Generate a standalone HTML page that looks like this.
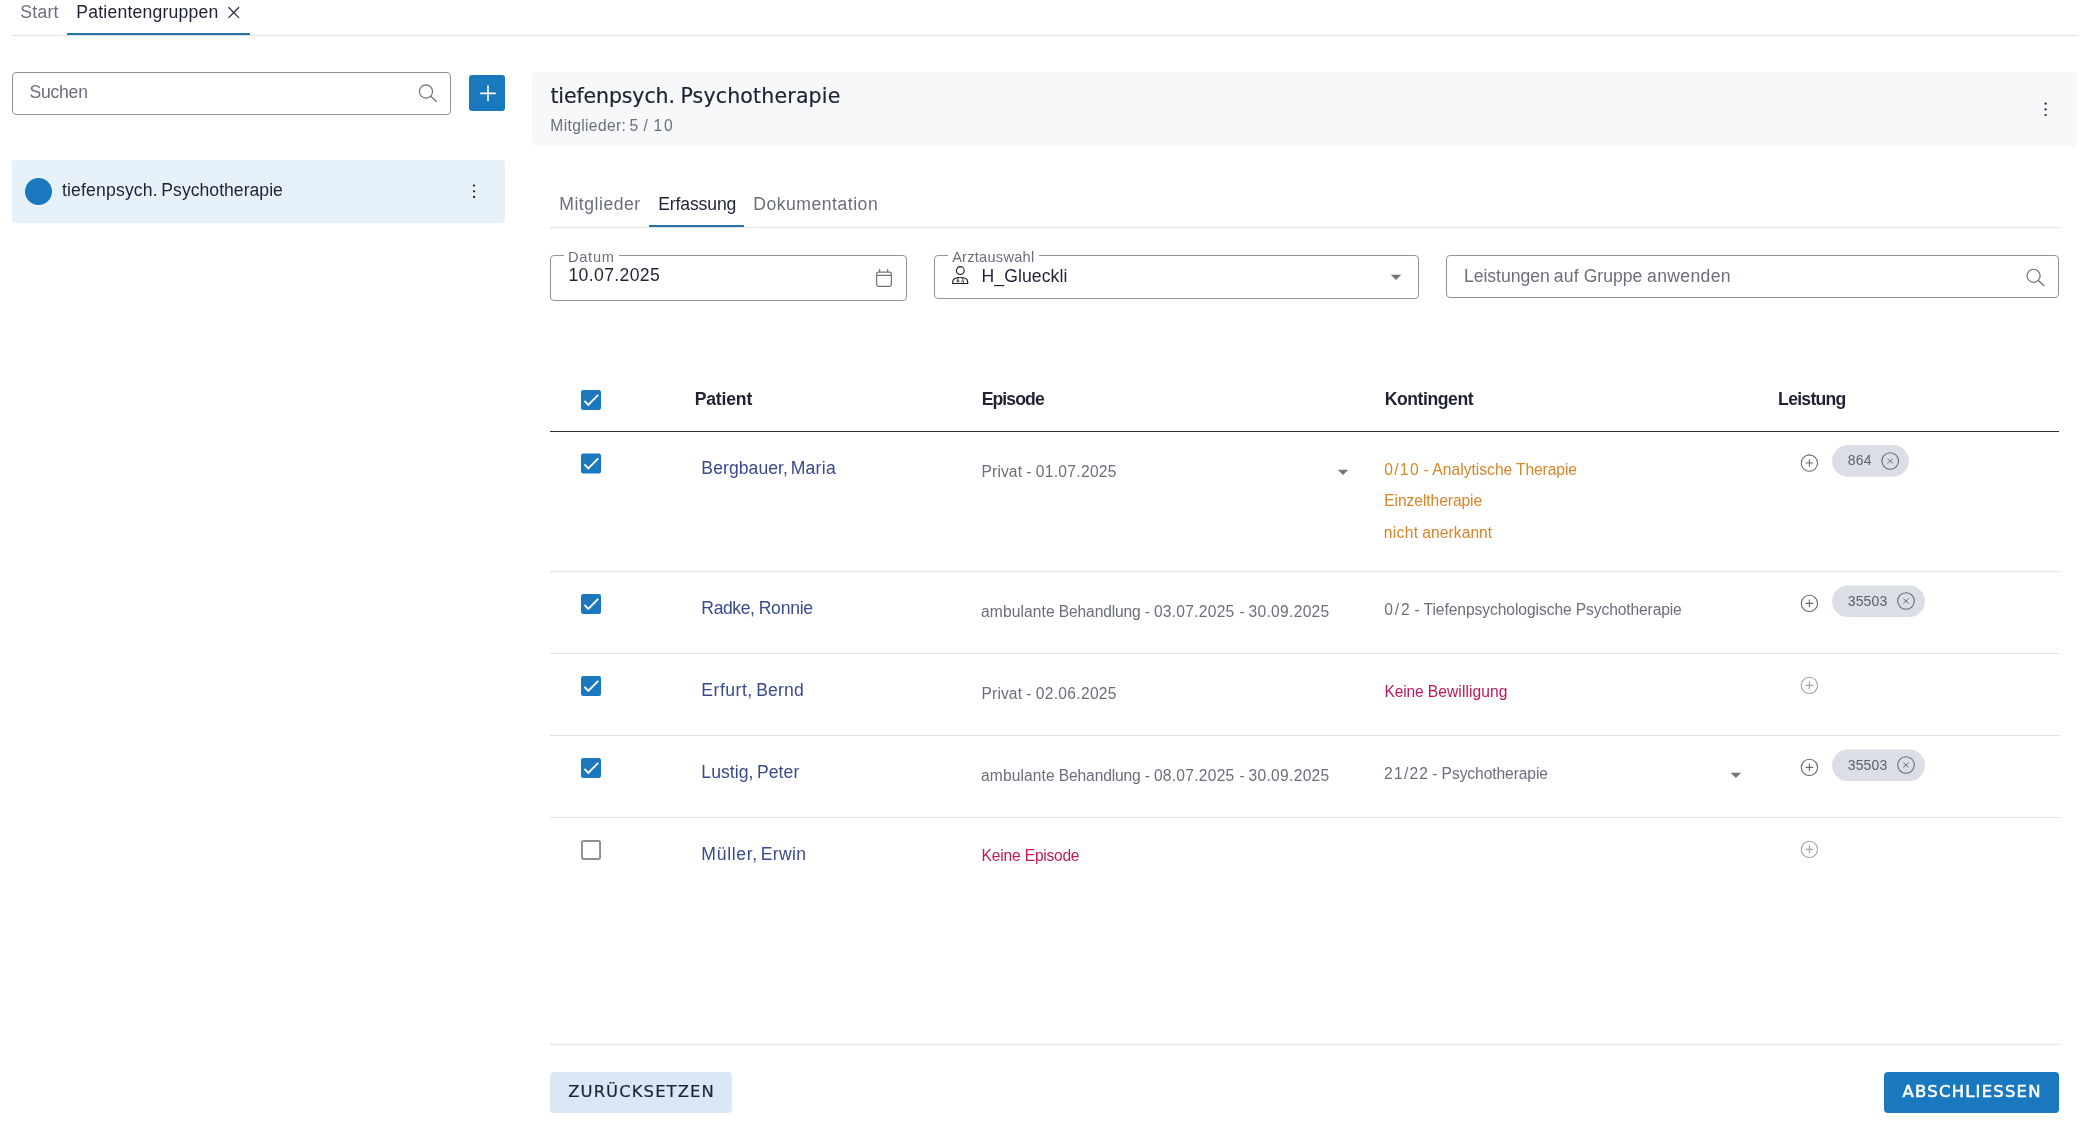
<!DOCTYPE html>
<html lang="de"><head><meta charset="utf-8"><title>Patientengruppen</title>
<style>
*{box-sizing:border-box;margin:0;padding:0}
html,body{width:2087px;height:1132px;background:#fff;overflow:hidden}
body{font-family:"Liberation Sans",sans-serif;color:#1e2233;position:relative}
.a{position:absolute;white-space:nowrap;line-height:1}
.ln{position:absolute;background:#e0e0e0;height:1px}
.box{position:absolute;border:1px solid #929398;border-radius:4px;background:#fff}
.cb{position:absolute;width:20px;height:20px;border-radius:2px;background:#1a78bf}
.cbe{position:absolute;width:20px;height:20px;border-radius:2.5px;border:1.5px solid #8a8c93;background:#fff}
svg{display:block;overflow:visible}
#root{position:absolute;left:0;top:0;width:2087px;height:1132px;will-change:transform}
</style></head><body><div id="root">

<svg class="a" style="left:228px;top:6px" width="12" height="13" viewBox="0 0 12 13"><g transform="translate(0 0.8) scale(0.9583 0.9583)"><path d="M0.5 0.5L11.5 11.5M11.5 0.5L0.5 11.5" stroke="#1e2233" stroke-width="1.2" fill="none"/></g></svg>
<div class="ln" style="left:12px;top:35px;width:2065px"></div>
<div class="a" style="left:67px;top:33px;width:183px;height:2px;background:#2673aa"></div>
<div class="box" style="left:12px;top:72px;width:439px;height:43px"></div>
<svg class="a" style="left:418px;top:84px" width="19" height="19" viewBox="0 0 19 19"><g transform="translate(0.8 0.3)"><circle cx="7.2" cy="7.2" r="6.55" stroke="#6e707a" stroke-width="1.2" fill="none"/><path d="M11.9 11.9L17.9 17.4" stroke="#6e707a" stroke-width="1.3"/></g></svg>
<div class="a" style="left:469px;top:75px;width:36px;height:36px;border-radius:3px;background:#1a78bf"></div>
<svg class="a" style="left:480px;top:85px" width="17" height="17" viewBox="0 0 17 17"><g transform="translate(0 0.4)"><path d="M8 0.2V15.8M0.2 8H15.8" stroke="#fff" stroke-width="1.6" fill="none"/></g></svg>
<div class="a" style="left:12px;top:160px;width:493px;height:63px;border-radius:4px;background:#e6f1f9"></div>
<div class="a" style="left:25px;top:178px;width:27px;height:27px;border-radius:50%;background:#1a78bf"></div>
<svg class="a" style="left:472px;top:184px" width="5" height="17" viewBox="0 0 5 17"><g transform="translate(0 0)"><circle cx="2.1" cy="1.6" r="1.15" fill="#1e2233"/><circle cx="2.1" cy="7.3" r="1.15" fill="#1e2233"/><circle cx="2.1" cy="13" r="1.15" fill="#1e2233"/></g></svg>
<div class="a" style="left:532px;top:72px;width:1545px;height:74px;border-radius:4px;background:#f7f8fa"></div>
<svg class="a" style="left:2043px;top:102px" width="5" height="17" viewBox="0 0 5 17"><g transform="translate(0.5 0.1)"><circle cx="2.1" cy="1.6" r="1.15" fill="#1e2233"/><circle cx="2.1" cy="7.3" r="1.15" fill="#1e2233"/><circle cx="2.1" cy="13" r="1.15" fill="#1e2233"/></g></svg>
<div class="ln" style="left:550px;top:227px;width:1509px"></div>
<div class="a" style="left:649px;top:225px;width:95px;height:2px;background:#2673aa"></div>
<div class="box" style="left:550px;top:255px;width:357px;height:46px"></div>
<div class="a" style="left:563.7px;top:254px;width:55.5px;height:3px;background:#fff"></div>
<svg class="a" style="left:876px;top:269px" width="17" height="19" viewBox="0 0 17 19"><g transform="translate(0 0)"><rect x="0.6" y="3.2" width="14.8" height="14.2" rx="1.8" stroke="#70727e" stroke-width="1.2" fill="none"/><path d="M0.6 6.3H15.4M3.6 0V3.2M11.6 0V3.2" stroke="#70727e" stroke-width="1.2"/></g></svg>
<div class="box" style="left:934px;top:255px;width:485px;height:44px"></div>
<div class="a" style="left:947.8px;top:254px;width:91.1px;height:3px;background:#fff"></div>
<svg class="a" style="left:952px;top:266px" width="17" height="19" viewBox="0 0 17 19"><g transform="translate(0 0)"><circle cx="8.3" cy="4.6" r="3.9" stroke="#1e2233" stroke-width="1.2" fill="none"/><path d="M0.7 17.5V16C0.7 12.6 3.9 11.5 8.2 11.5S15.7 12.6 15.7 16V17.5Z" stroke="#1e2233" stroke-width="1.2" fill="none" stroke-linejoin="round"/><path d="M5.9 11.9V14.2M10.8 11.9V14.3M9.9 16.6V15.5a0.9 0.9 0 0 1 1.8 0V16.6" stroke="#1e2233" stroke-width="0.9" fill="none"/><circle cx="5.9" cy="15.2" r="0.95" stroke="#1e2233" stroke-width="0.9" fill="none"/></g></svg>
<svg class="a" style="left:1390px;top:274px" width="12" height="7" viewBox="0 0 12 7"><g transform="translate(0.7 0.8)"><path d="M0 0H10.6L5.3 5.3Z" fill="#757575"/></g></svg>
<div class="box" style="left:1446px;top:255px;width:613px;height:43px"></div>
<svg class="a" style="left:2026px;top:268px" width="19" height="19" viewBox="0 0 19 19"><g transform="translate(0.4 0.6)"><circle cx="7.2" cy="7.2" r="6.55" stroke="#6e707a" stroke-width="1.2" fill="none"/><path d="M11.9 11.9L17.9 17.4" stroke="#6e707a" stroke-width="1.3"/></g></svg>
<div class="a" style="left:550px;top:431px;width:1509px;height:1px;background:#2a2d38"></div>
<div class="ln" style="left:550px;top:571px;width:1509px"></div>
<div class="ln" style="left:550px;top:653px;width:1509px"></div>
<div class="ln" style="left:550px;top:735px;width:1509px"></div>
<div class="ln" style="left:550px;top:817px;width:1509px"></div>
<div class="ln" style="left:550px;top:1044px;width:1509px"></div>
<svg class="a" style="left:581px;top:390px" width="21" height="21" viewBox="0 0 21 21"><g transform="translate(0 0)"><rect x="0" y="0" width="20" height="20" rx="2.2" fill="#1a78bf"/><path d="M3.4 10.9L7.3 14.9L17.2 4.9" stroke="#fff" stroke-width="1.9" fill="none"/></g></svg>
<svg class="a" style="left:581px;top:453px" width="21" height="21" viewBox="0 0 21 21"><g transform="translate(0 0.5)"><rect x="0" y="0" width="20" height="20" rx="2.2" fill="#1a78bf"/><path d="M3.4 10.9L7.3 14.9L17.2 4.9" stroke="#fff" stroke-width="1.9" fill="none"/></g></svg>
<svg class="a" style="left:581px;top:594px" width="21" height="21" viewBox="0 0 21 21"><g transform="translate(0 0)"><rect x="0" y="0" width="20" height="20" rx="2.2" fill="#1a78bf"/><path d="M3.4 10.9L7.3 14.9L17.2 4.9" stroke="#fff" stroke-width="1.9" fill="none"/></g></svg>
<svg class="a" style="left:581px;top:676px" width="21" height="21" viewBox="0 0 21 21"><g transform="translate(0 0)"><rect x="0" y="0" width="20" height="20" rx="2.2" fill="#1a78bf"/><path d="M3.4 10.9L7.3 14.9L17.2 4.9" stroke="#fff" stroke-width="1.9" fill="none"/></g></svg>
<svg class="a" style="left:581px;top:758px" width="21" height="21" viewBox="0 0 21 21"><g transform="translate(0 0)"><rect x="0" y="0" width="20" height="20" rx="2.2" fill="#1a78bf"/><path d="M3.4 10.9L7.3 14.9L17.2 4.9" stroke="#fff" stroke-width="1.9" fill="none"/></g></svg>
<svg class="a" style="left:581px;top:840px" width="21" height="21" viewBox="0 0 21 21"><g transform="translate(0 0)"><rect x="0.95" y="0.95" width="18.1" height="18.1" rx="1.7" stroke="#8d8e94" stroke-width="1.9" fill="none"/></g></svg>
<svg class="a" style="left:1337px;top:469px" width="12" height="7" viewBox="0 0 12 7"><g transform="translate(0.7 0.8)"><path d="M0 0H10.6L5.3 5.3Z" fill="#757575"/></g></svg>
<svg class="a" style="left:1730px;top:772px" width="12" height="7" viewBox="0 0 12 7"><g transform="translate(0.6 0.8)"><path d="M0 0H10.6L5.3 5.3Z" fill="#757575"/></g></svg>
<svg class="a" style="left:1799px;top:453px" width="21" height="21" viewBox="0 0 21 21"><g transform="translate(0.4 0.05)"><circle cx="10" cy="10" r="8.15" stroke="#666a76" stroke-width="1.1" fill="none"/><path d="M10 6.2V13.8M6.2 10H13.8" stroke="#666a76" stroke-width="1.1"/></g></svg>
<svg class="a" style="left:1799px;top:593px" width="21" height="21" viewBox="0 0 21 21"><g transform="translate(0.4 0.4)"><circle cx="10" cy="10" r="8.15" stroke="#666a76" stroke-width="1.1" fill="none"/><path d="M10 6.2V13.8M6.2 10H13.8" stroke="#666a76" stroke-width="1.1"/></g></svg>
<svg class="a" style="left:1799px;top:675px" width="21" height="21" viewBox="0 0 21 21"><g transform="translate(0.4 0.4)"><circle cx="10" cy="10" r="8.15" stroke="#a2a3a8" stroke-width="1.1" fill="none"/><path d="M10 6.2V13.8M6.2 10H13.8" stroke="#a2a3a8" stroke-width="1.1"/></g></svg>
<svg class="a" style="left:1799px;top:757px" width="21" height="21" viewBox="0 0 21 21"><g transform="translate(0.4 0.4)"><circle cx="10" cy="10" r="8.15" stroke="#666a76" stroke-width="1.1" fill="none"/><path d="M10 6.2V13.8M6.2 10H13.8" stroke="#666a76" stroke-width="1.1"/></g></svg>
<svg class="a" style="left:1799px;top:839px" width="21" height="21" viewBox="0 0 21 21"><g transform="translate(0.4 0.4)"><circle cx="10" cy="10" r="8.15" stroke="#a2a3a8" stroke-width="1.1" fill="none"/><path d="M10 6.2V13.8M6.2 10H13.8" stroke="#a2a3a8" stroke-width="1.1"/></g></svg>
<svg class="a" style="left:1832px;top:445px" width="77" height="32" viewBox="0 0 77 32"><g transform="translate(0.1 0.1)"><rect x="0" y="0" width="76.80000000000018" height="31.6" rx="15.8" fill="#dcdee5"/></g></svg>
<svg class="a" style="left:1880px;top:451px" width="21" height="21" viewBox="0 0 21 21"><g transform="translate(0.2 0)"><circle cx="10" cy="10" r="8.3" stroke="#666a76" stroke-width="1.1" fill="none"/><path d="M7.3 7.5L12.7 12.5M12.7 7.5L7.3 12.5" stroke="#666a76" stroke-width="0.95"/></g></svg>
<svg class="a" style="left:1832px;top:585px" width="93" height="33" viewBox="0 0 93 33"><g transform="translate(0.1 0.5)"><rect x="0" y="0" width="92.80000000000018" height="31.6" rx="15.8" fill="#dcdee5"/></g></svg>
<svg class="a" style="left:1896px;top:591px" width="21" height="21" viewBox="0 0 21 21"><g transform="translate(0 0)"><circle cx="10" cy="10" r="8.3" stroke="#666a76" stroke-width="1.1" fill="none"/><path d="M7.3 7.5L12.7 12.5M12.7 7.5L7.3 12.5" stroke="#666a76" stroke-width="0.95"/></g></svg>
<svg class="a" style="left:1832px;top:749px" width="93" height="33" viewBox="0 0 93 33"><g transform="translate(0.1 0.5)"><rect x="0" y="0" width="92.80000000000018" height="31.6" rx="15.8" fill="#dcdee5"/></g></svg>
<svg class="a" style="left:1896px;top:755px" width="21" height="21" viewBox="0 0 21 21"><g transform="translate(0 0)"><circle cx="10" cy="10" r="8.3" stroke="#666a76" stroke-width="1.1" fill="none"/><path d="M7.3 7.5L12.7 12.5M12.7 7.5L7.3 12.5" stroke="#666a76" stroke-width="0.95"/></g></svg>
<div class="a" style="left:550px;top:1072px;width:182px;height:41px;border-radius:4px;background:#d9e8f4"></div>
<div class="a" style="left:1884px;top:1072px;width:175px;height:41px;border-radius:4px;background:#1a78bf"></div>
<div class="a" id="t0" style="left:20.32px;top:4.10px;font-size:17.6px;color:#6b6f7b;letter-spacing:0.233px;">Start</div>
<div class="a" id="t1" style="left:76.27px;top:4.10px;font-size:17.6px;color:#1e2233;letter-spacing:0.213px;">Patientengruppen</div>
<div class="a" id="t2" style="left:29.38px;top:84.10px;font-size:17.6px;color:#6b6f7b;letter-spacing:-0.226px;">Suchen</div>
<div class="a" id="t3" style="left:61.90px;top:182.10px;font-size:17.6px;color:#1e2233;letter-spacing:0.174px;">tiefenpsych.</div>
<div class="a" id="t4" style="left:161.36px;top:182.10px;font-size:17.6px;color:#1e2233;letter-spacing:0.017px;">Psychotherapie</div>
<div class="a" id="t5" style="left:550.41px;top:85.65px;font-size:20.5px;color:#1e2233;letter-spacing:-0.113px;font-family:DejaVu Sans,sans-serif;-webkit-text-stroke:0.2px #1e2233;">tiefenpsych.</div>
<div class="a" id="t6" style="left:680.39px;top:85.65px;font-size:20.5px;color:#1e2233;letter-spacing:0.181px;font-family:DejaVu Sans,sans-serif;-webkit-text-stroke:0.2px #1e2233;">Psychotherapie</div>
<div class="a" id="t7" style="left:550.37px;top:117.79px;font-size:15.6px;color:#6b6f7b;letter-spacing:0.354px;">Mitglieder:</div>
<div class="a" id="t8" style="left:629.46px;top:117.79px;font-size:15.6px;color:#6b6f7b;">5</div>
<div class="a" id="t9" style="left:643.62px;top:117.79px;font-size:15.6px;color:#6b6f7b;">/</div>
<div class="a" id="t10" style="left:653.43px;top:117.79px;font-size:15.6px;color:#6b6f7b;letter-spacing:1.886px;">10</div>
<div class="a" id="t11" style="left:559.21px;top:196.10px;font-size:17.6px;color:#6b6f7b;letter-spacing:0.524px;">Mitglieder</div>
<div class="a" id="t12" style="left:658.15px;top:196.10px;font-size:17.6px;color:#1e2233;letter-spacing:-0.129px;">Erfassung</div>
<div class="a" id="t13" style="left:753.21px;top:196.10px;font-size:17.6px;color:#6b6f7b;letter-spacing:0.511px;">Dokumentation</div>
<div class="a" id="t14" style="left:567.88px;top:249.64px;font-size:14.6px;color:#6b6f7b;letter-spacing:0.778px;">Datum</div>
<div class="a" id="t15" style="left:568.43px;top:267.10px;font-size:17.6px;color:#1e2233;letter-spacing:0.367px;">10.07.2025</div>
<div class="a" id="t16" style="left:952.14px;top:249.64px;font-size:14.6px;color:#6b6f7b;letter-spacing:0.254px;">Arztauswahl</div>
<div class="a" id="t17" style="left:981.55px;top:268.10px;font-size:17.6px;color:#1e2233;letter-spacing:0.082px;">H_Glueckli</div>
<div class="a" id="t18" style="left:1463.89px;top:268.10px;font-size:17.6px;color:#6b6f7b;letter-spacing:-0.031px;">Leistungen</div>
<div class="a" id="t19" style="left:1553.76px;top:268.10px;font-size:17.6px;color:#6b6f7b;letter-spacing:0.239px;">auf</div>
<div class="a" id="t20" style="left:1583.68px;top:268.10px;font-size:17.6px;color:#6b6f7b;">Gruppe</div>
<div class="a" id="t21" style="left:1647.04px;top:268.10px;font-size:17.6px;color:#6b6f7b;letter-spacing:0.336px;">anwenden</div>
<div class="a" id="t22" style="left:694.64px;top:391.10px;font-size:17.6px;color:#1e2233;font-weight:700;letter-spacing:-0.164px;">Patient</div>
<div class="a" id="t23" style="left:981.65px;top:391.10px;font-size:17.6px;color:#1e2233;font-weight:700;letter-spacing:-0.894px;">Episode</div>
<div class="a" id="t24" style="left:1384.65px;top:391.10px;font-size:17.6px;color:#1e2233;font-weight:700;letter-spacing:-0.428px;">Kontingent</div>
<div class="a" id="t25" style="left:1778.11px;top:391.10px;font-size:17.6px;color:#1e2233;font-weight:700;letter-spacing:-0.723px;">Leistung</div>
<div class="a" id="t26" style="left:701.36px;top:460.10px;font-size:17.6px;color:#3b4a8c;letter-spacing:0.056px;">Bergbauer,</div>
<div class="a" id="t27" style="left:790.68px;top:460.10px;font-size:17.6px;color:#3b4a8c;letter-spacing:0.253px;">Maria</div>
<div class="a" id="t28" style="left:701.36px;top:600.10px;font-size:17.6px;color:#3b4a8c;letter-spacing:-0.439px;">Radke,</div>
<div class="a" id="t29" style="left:758.68px;top:600.10px;font-size:17.6px;color:#3b4a8c;letter-spacing:-0.254px;">Ronnie</div>
<div class="a" id="t30" style="left:701.36px;top:682.10px;font-size:17.6px;color:#3b4a8c;letter-spacing:0.496px;">Erfurt,</div>
<div class="a" id="t31" style="left:756.22px;top:682.10px;font-size:17.6px;color:#3b4a8c;letter-spacing:0.155px;">Bernd</div>
<div class="a" id="t32" style="left:701.36px;top:764.10px;font-size:17.6px;color:#3b4a8c;letter-spacing:0.028px;">Lustig,</div>
<div class="a" id="t33" style="left:756.94px;top:764.10px;font-size:17.6px;color:#3b4a8c;letter-spacing:0.071px;">Peter</div>
<div class="a" id="t34" style="left:701.36px;top:846.10px;font-size:17.6px;color:#3b4a8c;letter-spacing:0.674px;">Müller,</div>
<div class="a" id="t35" style="left:760.63px;top:846.10px;font-size:17.6px;color:#3b4a8c;letter-spacing:0.355px;">Erwin</div>
<div class="a" id="t36" style="left:981.62px;top:463.79px;font-size:15.6px;color:#6b6f7b;letter-spacing:0.099px;">Privat</div>
<div class="a" id="t37" style="left:1026.23px;top:463.79px;font-size:15.6px;color:#6b6f7b;">-</div>
<div class="a" id="t38" style="left:1035.74px;top:463.79px;font-size:15.6px;color:#6b6f7b;letter-spacing:0.305px;">01.07.2025</div>
<div class="a" id="t39" style="left:981.09px;top:603.79px;font-size:15.6px;color:#6b6f7b;letter-spacing:0.085px;">ambulante</div>
<div class="a" id="t40" style="left:1058.84px;top:603.79px;font-size:15.6px;color:#6b6f7b;letter-spacing:-0.155px;">Behandlung</div>
<div class="a" id="t41" style="left:1144.67px;top:603.79px;font-size:15.6px;color:#6b6f7b;">-</div>
<div class="a" id="t42" style="left:1153.88px;top:603.79px;font-size:15.6px;color:#6b6f7b;letter-spacing:0.264px;">03.07.2025</div>
<div class="a" id="t43" style="left:1239.47px;top:603.79px;font-size:15.6px;color:#6b6f7b;">-</div>
<div class="a" id="t44" style="left:1248.56px;top:603.79px;font-size:15.6px;color:#6b6f7b;letter-spacing:0.293px;">30.09.2025</div>
<div class="a" id="t45" style="left:981.62px;top:685.79px;font-size:15.6px;color:#6b6f7b;letter-spacing:0.099px;">Privat</div>
<div class="a" id="t46" style="left:1026.23px;top:685.79px;font-size:15.6px;color:#6b6f7b;">-</div>
<div class="a" id="t47" style="left:1035.74px;top:685.79px;font-size:15.6px;color:#6b6f7b;letter-spacing:0.305px;">02.06.2025</div>
<div class="a" id="t48" style="left:981.09px;top:767.79px;font-size:15.6px;color:#6b6f7b;letter-spacing:0.085px;">ambulante</div>
<div class="a" id="t49" style="left:1058.84px;top:767.79px;font-size:15.6px;color:#6b6f7b;letter-spacing:-0.155px;">Behandlung</div>
<div class="a" id="t50" style="left:1144.67px;top:767.79px;font-size:15.6px;color:#6b6f7b;">-</div>
<div class="a" id="t51" style="left:1153.88px;top:767.79px;font-size:15.6px;color:#6b6f7b;letter-spacing:0.264px;">08.07.2025</div>
<div class="a" id="t52" style="left:1239.47px;top:767.79px;font-size:15.6px;color:#6b6f7b;">-</div>
<div class="a" id="t53" style="left:1248.56px;top:767.79px;font-size:15.6px;color:#6b6f7b;letter-spacing:0.293px;">30.09.2025</div>
<div class="a" id="t54" style="left:981.62px;top:847.79px;font-size:15.6px;color:#c2185b;letter-spacing:-0.214px;">Keine</div>
<div class="a" id="t55" style="left:1024.82px;top:847.79px;font-size:15.6px;color:#c2185b;letter-spacing:-0.286px;">Episode</div>
<div class="a" id="t56" style="left:1384.13px;top:461.79px;font-size:15.6px;color:#d88428;letter-spacing:1.361px;">0/10</div>
<div class="a" id="t57" style="left:1423.41px;top:461.79px;font-size:15.6px;color:#d88428;">-</div>
<div class="a" id="t58" style="left:1432.37px;top:461.79px;font-size:15.6px;color:#d88428;letter-spacing:0.015px;">Analytische</div>
<div class="a" id="t59" style="left:1515.93px;top:461.79px;font-size:15.6px;color:#d88428;letter-spacing:-0.062px;">Therapie</div>
<div class="a" id="t60" style="left:1384.30px;top:492.79px;font-size:15.6px;color:#d88428;letter-spacing:-0.074px;">Einzeltherapie</div>
<div class="a" id="t61" style="left:1383.74px;top:524.79px;font-size:15.6px;color:#d88428;letter-spacing:0.350px;">nicht</div>
<div class="a" id="t62" style="left:1422.36px;top:524.79px;font-size:15.6px;color:#d88428;letter-spacing:0.056px;">anerkannt</div>
<div class="a" id="t63" style="left:1384.13px;top:601.79px;font-size:15.6px;color:#6b6f7b;letter-spacing:1.970px;">0/2</div>
<div class="a" id="t64" style="left:1414.43px;top:601.79px;font-size:15.6px;color:#6b6f7b;">-</div>
<div class="a" id="t65" style="left:1423.54px;top:601.79px;font-size:15.6px;color:#6b6f7b;letter-spacing:-0.062px;">Tiefenpsychologische</div>
<div class="a" id="t66" style="left:1575.84px;top:601.79px;font-size:15.6px;color:#6b6f7b;letter-spacing:-0.121px;">Psychotherapie</div>
<div class="a" id="t67" style="left:1384.62px;top:683.79px;font-size:15.6px;color:#c2185b;letter-spacing:-0.214px;">Keine</div>
<div class="a" id="t68" style="left:1427.82px;top:683.79px;font-size:15.6px;color:#c2185b;letter-spacing:0.074px;">Bewilligung</div>
<div class="a" id="t69" style="left:1384.10px;top:765.79px;font-size:15.6px;color:#6b6f7b;letter-spacing:1.229px;">21/22</div>
<div class="a" id="t70" style="left:1432.20px;top:765.79px;font-size:15.6px;color:#6b6f7b;">-</div>
<div class="a" id="t71" style="left:1441.60px;top:765.79px;font-size:15.6px;color:#6b6f7b;letter-spacing:-0.083px;">Psychotherapie</div>
<div class="a" id="t72" style="left:1847.76px;top:453.15px;font-size:14px;color:#5b6070;letter-spacing:0.183px;">864</div>
<div class="a" id="t73" style="left:1847.72px;top:594.15px;font-size:14px;color:#5b6070;letter-spacing:0.143px;">35503</div>
<div class="a" id="t74" style="left:1847.72px;top:758.15px;font-size:14px;color:#5b6070;letter-spacing:0.143px;">35503</div>
<div class="a" id="t75" style="left:568.21px;top:1084.12px;font-size:16.4px;color:#1e2233;letter-spacing:1.102px;font-family:DejaVu Sans,sans-serif;-webkit-text-stroke:0.2px #1e2233;">ZURÜCKSETZEN</div>
<div class="a" id="t76" style="left:1902.62px;top:1084.10px;font-size:16.4px;color:#fff;letter-spacing:1.253px;font-family:DejaVu Sans,sans-serif;-webkit-text-stroke:0.55px #fff;">ABSCHLIESSEN</div>
</div></body></html>
